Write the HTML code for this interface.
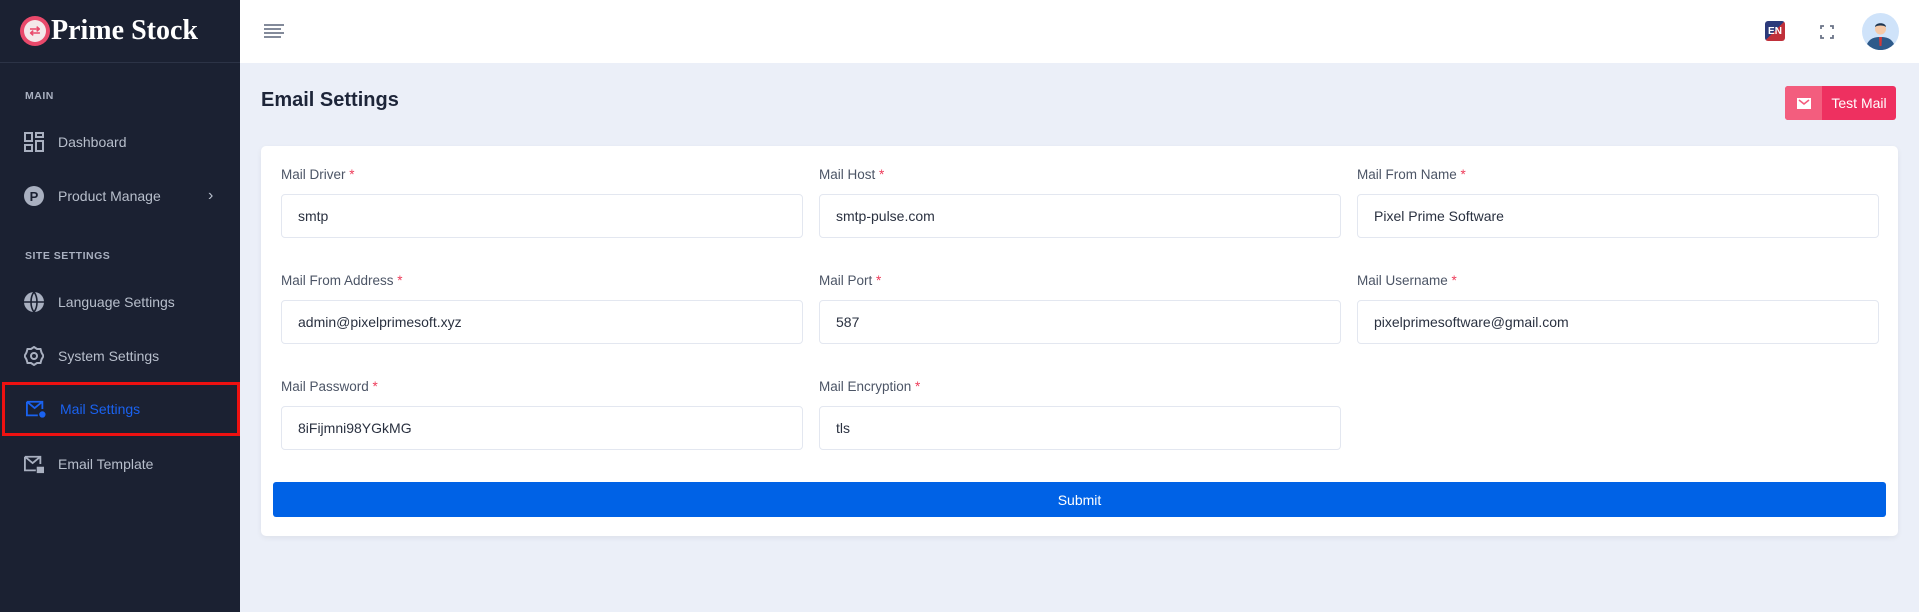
<!DOCTYPE html>
<html><head><meta charset="utf-8"><style>
*{box-sizing:border-box;margin:0;padding:0}
body{width:1919px;height:612px;overflow:hidden;background:#ebeff8;font-family:"Liberation Sans",sans-serif;position:relative}
.sb{position:absolute;left:0;top:0;width:240px;height:612px;background:#1b2132}
.logo{height:63px;border-bottom:1px solid #2c3346;display:flex;align-items:center;padding-left:20px}
.logo .c{width:30px;height:30px;border-radius:50%;background:#e9496b;display:flex;align-items:center;justify-content:center}
.logo .c span{width:22px;height:22px;border-radius:50%;background:#f4e8ea;color:#e9496b;font-size:13px;font-weight:bold;display:flex;align-items:center;justify-content:center}
.logo b{font-family:"Liberation Serif",serif;color:#fff;font-size:28px;margin-left:1px}
.sec{position:absolute;left:25px;color:#a9b0c0;font-size:10.5px;font-weight:bold;letter-spacing:0.5px}
.it{position:absolute;left:0;width:240px;height:44px;display:flex;align-items:center;padding-left:24px;color:#b8bfcc;font-size:14px}
.it svg{margin-right:14px}
.act{border:3px solid #ee1111;left:2px;width:238px;color:#1a62f0;padding-left:21px}
.hd{position:absolute;left:240px;top:0;right:0;height:63px;background:#fff}
h1{position:absolute;left:261px;top:89px;font-size:20px;font-weight:bold;color:#1d2539}
.tm{position:absolute;left:1785px;top:86px;width:111px;height:34px;border-radius:3px;background:#ee3060;display:flex;overflow:hidden}
.tm .ic{width:37px;background:#f35d7e;display:flex;align-items:center;justify-content:center}
.tm .t{flex:1;color:#fff;font-size:14px;display:flex;align-items:center;justify-content:center}
.card{position:absolute;left:261px;top:146px;width:1637px;height:390px;background:#fff;border-radius:5px;box-shadow:0 2px 6px rgba(0,0,0,.06)}
.lb{position:absolute;font-size:13.5px;color:#4c5566}
.lb i{color:#ee3c5a;font-style:normal}
.in{position:absolute;width:522px;height:44px;border:1px solid #e3e7f0;border-radius:4px;padding-left:16px;display:flex;align-items:center;font-size:14px;color:#2a3140}
.sub{position:absolute;left:273px;top:482px;width:1613px;height:35px;background:#0062e6;border-radius:3px;color:#fff;font-size:14px;display:flex;align-items:center;justify-content:center}
</style></head><body>
<div class="sb">
<div class="logo"><div class="c"><span>⇄</span></div><b>Prime Stock</b></div>
<div class="sec" style="top:90px">MAIN</div>
<div class="it" style="top:120px"><svg width="20" height="20" viewBox="0 0 20 20" fill="none" stroke="#a9b0c0" stroke-width="2"><rect x="1" y="1" width="7" height="8"/><rect x="12" y="1" width="7" height="4"/><rect x="1" y="13" width="7" height="6"/><rect x="12" y="9" width="7" height="10"/></svg>Dashboard</div>
<div class="it" style="top:174px"><svg width="20" height="20" viewBox="0 0 20 20"><circle cx="10" cy="10" r="10" fill="#a9b0c0"/><text x="10" y="15" text-anchor="middle" font-size="13" font-weight="bold" fill="#1b2132" font-family="Liberation Sans">P</text></svg>Product Manage<span style="position:absolute;left:208px;font-size:16px">›</span></div>
<div class="sec" style="top:250px">SITE SETTINGS</div>
<div class="it" style="top:280px"><svg width="20" height="20" viewBox="0 0 20 20"><circle cx="10" cy="10" r="10" fill="#a9b0c0"/><path d="M0 10h20M10 0c-4 5-4 15 0 20M10 0c4 5 4 15 0 20" stroke="#1b2132" stroke-width="1.6" fill="none"/></svg>Language Settings</div>
<div class="it" style="top:334px"><svg width="20" height="20" viewBox="0 0 20 20" fill="none" stroke="#a9b0c0" stroke-width="2"><path d="M10 1l3 2 3.5 0 1 3.5 2 3.5-2 3.5-1 3.5-3.5 0-3 2-3-2-3.5 0-1-3.5-2-3.5 2-3.5 1-3.5 3.5 0z"/><circle cx="10" cy="10" r="3"/></svg>System Settings</div>
<div class="it act" style="top:382px;height:54px"><svg width="20" height="20" viewBox="0 0 22 20" fill="none" stroke="#1a62f0" stroke-width="2"><path d="M1 2h17v8M1 2v15h12M1 2l8.5 7L18 2"/><circle cx="18" cy="16" r="2.5" fill="#1a62f0"/></svg>Mail Settings</div>
<div class="it" style="top:442px"><svg width="20" height="20" viewBox="0 0 22 20" fill="none" stroke="#a9b0c0" stroke-width="2"><path d="M1 2h17v8M1 2v15h12M1 2l8.5 7L18 2"/><rect x="15" y="14" width="6" height="5" fill="#a9b0c0"/></svg>Email Template</div>
</div>
<div class="hd">
<svg style="position:absolute;left:24px;top:24px" width="20" height="14" viewBox="0 0 20 14" stroke="#5a6478" stroke-width="1.6"><path d="M0 1h20M0 5h17M0 9h20M0 13h17"/></svg>
<div style="position:absolute;left:1525px;top:21px;width:20px;height:20px;border-radius:3px;background:linear-gradient(135deg,#2c3a7a 50%,#c0303a 50%);color:#fff;font-size:10px;font-weight:bold;display:flex;align-items:center;justify-content:center">EN</div>
<svg style="position:absolute;left:1580px;top:25px" width="14" height="14" viewBox="0 0 14 14" fill="none" stroke="#6b7488" stroke-width="1.8"><path d="M1 4V1h3M10 1h3v3M13 10v3h-3M4 13H1v-3"/></svg>
<svg style="position:absolute;left:1622px;top:13px" width="37" height="37" viewBox="0 0 37 37"><circle cx="18.5" cy="18.5" r="18.5" fill="#cfe3fa"/><path d="M5 31c3-6 8-7 13.5-7s10.5 1 13.5 7a18 18 0 0 1-27 0z" fill="#2d5a8a"/><path d="M17 24h3l-0.5 9h-2z" fill="#d03a3a"/><circle cx="18.5" cy="16" r="5.5" fill="#f5c9a8"/><path d="M13 14c0-5 11-5 11 0c-2-2-9-2-11 0z" fill="#1e3550"/></svg>
</div>
<h1>Email Settings</h1>
<div class="tm"><div class="ic"><svg width="14" height="11" viewBox="0 0 14 11"><rect width="14" height="11" fill="#fff"/><path d="M2 2l5 4 5-4" stroke="#f35d7e" stroke-width="1.6" fill="none"/></svg></div><div class="t">Test Mail</div></div>
<div class="card"></div>
<div class="lb" style="left:281px;top:167px">Mail Driver <i>*</i></div>
<div class="lb" style="left:819px;top:167px">Mail Host <i>*</i></div>
<div class="lb" style="left:1357px;top:167px">Mail From Name <i>*</i></div>
<div class="in" style="left:281px;top:194px">smtp</div>
<div class="in" style="left:819px;top:194px">smtp-pulse.com</div>
<div class="in" style="left:1357px;top:194px">Pixel Prime Software</div>
<div class="lb" style="left:281px;top:273px">Mail From Address <i>*</i></div>
<div class="lb" style="left:819px;top:273px">Mail Port <i>*</i></div>
<div class="lb" style="left:1357px;top:273px">Mail Username <i>*</i></div>
<div class="in" style="left:281px;top:300px">admin@pixelprimesoft.xyz</div>
<div class="in" style="left:819px;top:300px">587</div>
<div class="in" style="left:1357px;top:300px">pixelprimesoftware@gmail.com</div>
<div class="lb" style="left:281px;top:379px">Mail Password <i>*</i></div>
<div class="lb" style="left:819px;top:379px">Mail Encryption <i>*</i></div>
<div class="in" style="left:281px;top:406px">8iFijmni98YGkMG</div>
<div class="in" style="left:819px;top:406px">tls</div>
<div class="sub">Submit</div>
</body></html>
